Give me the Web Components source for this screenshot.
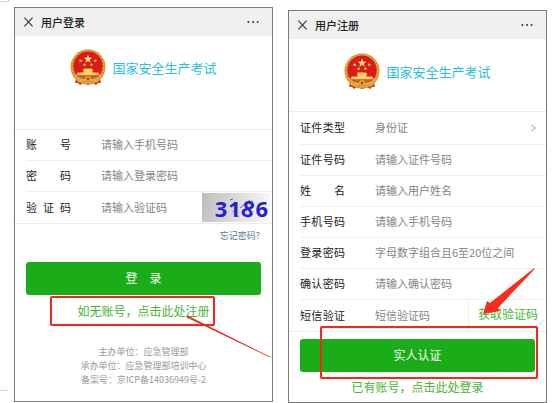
<!DOCTYPE html>
<html lang="zh-CN">
<head>
<meta charset="utf-8">
<title>国家安全生产考试</title>
<style>
  body {
    margin: 0;
    background: #fff;
    font-family: "Noto Sans CJK SC", "Noto Sans", sans-serif;
    font-size: 11px;
    color: #222;
  }
</style>
</head>
<body>
<guide-page>
  <phone-screen heading="用户登录">
    <brand-logo>国家安全生产考试</brand-logo>
    <form-list>
      <form-row label="账 号" placeholder="请输入手机号码"></form-row>
      <form-row label="密 码" type="password" placeholder="请输入登录密码"></form-row>
      <form-row label="验 证 码" placeholder="请输入验证码" last>
        <captcha-code slot="end" code="3186"></captcha-code>
      </form-row>
    </form-list>
    <forgot-link>忘记密码?</forgot-link>
    <submit-button>登&emsp;录</submit-button>
    <switch-link marked>如无账号，点击此处注册</switch-link>
    <site-footer>
      <div>主办单位：应急管理部</div>
      <div>承办单位：应急管理部培训中心</div>
      <div>备案号：京ICP备14036949号-2</div>
    </site-footer>
  </phone-screen>

  <phone-screen heading="用户注册" class="second">
    <brand-logo compact>国家安全生产考试</brand-logo>
    <form-list>
      <form-row label="证件类型" options="身份证" tall></form-row>
      <form-row label="证件号码" placeholder="请输入证件号码"></form-row>
      <form-row label="姓 名" placeholder="请输入用户姓名"></form-row>
      <form-row label="手机号码" placeholder="请输入手机号码"></form-row>
      <form-row label="登录密码" type="password" placeholder="字母数字组合且6至20位之间"></form-row>
      <form-row label="确认密码" type="password" placeholder="请输入确认密码"></form-row>
      <form-row label="短信验证" placeholder="短信验证码" last>
        <code-button slot="end">获取验证码</code-button>
      </form-row>
    </form-list>
    <submit-button class="register" marked>实人认证</submit-button>
    <switch-link class="login">已有账号，点击此处登录</switch-link>
  </phone-screen>
</guide-page>

<script>
// attaches an open shadow root filled from an html string
function render(el, html) {
  const template = document.createElement("template");
  template.innerHTML = html;
  el.attachShadow({ mode: "open" }).appendChild(template.content.cloneNode(true));
}

class GuidePage extends HTMLElement {
  constructor() {
    super();
    render(this, `
      <style>
        :host {
          display: grid;
          position: relative;
          grid-template-columns: repeat(2, minmax(0, 1fr));
          align-items: start;
          gap: 15px;
          padding: 7px 7px 0 14px;
        }
        ::slotted(.second) { margin-top: 3px; }
        .corner {
          position: absolute;
          left: 0;
          width: 8px;
          border: 0 solid #d4d4d4;
        }
        .top { top: 0; height: 1px; border-width: 0 1px 1px 0; }
        .bottom { top: 390px; border-width: 1px 0 0; }
      </style>
      <span class="corner top"></span>
      <span class="corner bottom"></span>
      <slot></slot>
    `);
  }
}

class PhoneScreen extends HTMLElement {
  constructor() {
    super();
    render(this, `
      <style>
        :host {
          display: block;
          border: 1px solid #7a7a7a;
          background: #fff;
        }
        header {
          display: flex;
          align-items: center;
          gap: 8px;
          height: 28px;
          padding: 0 13px 0 9px;
          background: #f0f0f0;
        }
        h1 {
          flex: 1;
          margin: 0;
          font-size: 11px;
          line-height: 16px;
          font-weight: 500;
        }
        button {
          display: flex;
          padding: 0;
          border: 0;
          background: none;
        }
      </style>
      <header>
        <button aria-label="关闭">
          <svg width="9" height="10" viewBox="0 0 9 10" stroke="#333" stroke-width="1.1">
            <path d="M.4.7l8.2 8.6M8.6.7L.4 9.3"/>
          </svg>
        </button>
        <h1></h1>
        <button aria-label="更多">
          <svg width="12" height="4" viewBox="0 0 12 4" fill="#333">
            <circle cx="1.4" cy="2" r="1"/><circle cx="6" cy="2" r="1"/><circle cx="10.6" cy="2" r="1"/>
          </svg>
        </button>
      </header>
      <slot></slot>
    `);
    this.shadowRoot.querySelector("h1").textContent = this.getAttribute("heading");
  }
}

class BrandLogo extends HTMLElement {
  constructor() {
    super();
    render(this, `
      <style>
        :host {
          display: flex;
          justify-content: center;
          align-items: center;
          gap: 6px;
          padding: 13px 0 43px;
          font-size: 13px;
          line-height: 20px;
          color: #2bbfdc;
        }
        :host([compact]) { padding: 14px 0 21px; }
        svg { display: block; }
      </style>
      <svg width="36" height="37" viewBox="0 0 36 37">
        <path d="M7 26L5 34q3-1 5 2l3-2 5 2 5-2 3 2q2-3 5-2l-2-8z" fill="#c8331b"/>
        <circle cx="18" cy="18" r="17.5" fill="#cf8a2e"/>
        <circle cx="18" cy="18" r="16" fill="none" stroke="#e5b04a" stroke-width="1.6" stroke-dasharray="2 1.2"/>
        <circle cx="18" cy="17" r="14.6" fill="#dc1a16"/>
        <path d="M18 5.500l1.200 3.200h3.200l-2.600 2 1 3.100-2.800-1.900-2.800 1.900 1-3.100-2.600-2h3.200z" fill="#fde18a"/>
        <g fill="#fbd36b">
          <path d="M10.7 9.8l.5 1.3h1.4l-1.1.9.4 1.4-1.2-.8-1.2.8.4-1.4-1.1-.9h1.4z"/>
          <path d="M25.3 9.8l.5 1.3h1.4l-1.1.9.4 1.4-1.2-.8-1.2.8.4-1.4-1.1-.9h1.4z"/>
          <path d="M14.6 13.700l.5 1.3h1.3l-1 .8.3 1.4-1.1-.8-1.1.8.3-1.4-1-.8h1.3z"/>
          <path d="M21.4 13.700l.5 1.3h1.3l-1 .8.3 1.4-1.1-.8-1.1.8.3-1.4-1-.8h1.3z"/>
          <path d="M14 19.500h8l1.500 2h-11zM13.500 21.500h9v2h-9zM7.500 23.500h21l1 3h-23z"/>
        </g>
        <path d="M5 26.5h26q-4 4-8 4.5H13q-4-.5-8-4.5z" fill="#c4641f"/>
        <path d="M5 26q4 5 10 4.5M31 26q-4 5-10 4.5M7 32q5-1 8-1M29 32q-5-1-8-1" fill="none" stroke="#e9b44b" stroke-width="1.3"/>
        <circle cx="18" cy="30" r="3" fill="#dfa33c"/>
        <circle cx="18" cy="30" r="1.2" fill="#b2381c"/>
        <path d="M13 34q5-2 10 0M9 30l1 4M27 30l-1 4" fill="none" stroke="#e0a03a"/>
      </svg>
      <slot></slot>
    `);
  }
}

class FormList extends HTMLElement {
  constructor() {
    super();
    render(this, `
      <style>
        :host {
          display: block;
          border: solid #ececec;
          border-width: 1px 0;
          padding-left: 11px;
        }
      </style>
      <slot></slot>
    `);
  }
}

class FormRow extends HTMLElement {
  constructor() {
    super();
    render(this, `
      <style>
        :host {
          display: flex;
          align-items: center;
          box-sizing: border-box;
          height: 31px;
          border-bottom: 1px solid #efefef;
        }
        :host([tall]) { height: 33px; }
        :host([last]) { border-bottom: 0; }
        label {
          flex: none;
          width: 45px;
          margin-right: 30px;
          padding-bottom: 2px;
          line-height: 16px;
          text-align-last: justify;
        }
        input, select {
          flex: 1;
          min-width: 0;
          height: 20px;
          margin: 0;
          padding: 0 0 2px;
          border: 0;
          outline: 0;
          appearance: none;
          background: none;
          font: inherit;
          color: #858585;
        }
        input::placeholder { color: #858585; }
        svg { margin-right: 10px; }
        ::slotted(*) { flex: none; }
      </style>
      <label for="field"></label>
    `);
    const root = this.shadowRoot;
    root.querySelector("label").textContent = this.getAttribute("label");

    if (this.hasAttribute("options")) {
      const select = document.createElement("select");
      select.id = "field";
      this.getAttribute("options").split(",").forEach((name) => select.add(new Option(name)));
      root.append(select);
      select.insertAdjacentHTML("afterend", `
        <svg width="5" height="8" viewBox="0 0 5 8" fill="none" stroke="#b5b5b5" stroke-width="1.2">
          <path d="M.6.6L4.2 4 .6 7.4"/>
        </svg>`);
    } else {
      const input = document.createElement("input");
      input.id = "field";
      input.type = this.getAttribute("type") || "text";
      input.placeholder = this.getAttribute("placeholder");
      root.append(input);
    }

    const slot = document.createElement("slot");
    slot.name = "end";
    root.append(slot);
  }
}

class CaptchaCode extends HTMLElement {
  constructor() {
    super();
    render(this, `
      <style>
        :host {
          display: flex;
          justify-content: flex-end;
          align-items: center;
          gap: 1px;
          box-sizing: border-box;
          position: relative;
          width: 68px;
          height: 29px;
          margin-right: 2px;
          padding-right: 2px;
          background: linear-gradient(100deg, #bebebe, #dcdcdc 50%, #fafafa);
          font: bold 22px/28px "Open Sans", "Noto Sans", sans-serif;
          color: #2420d8;
        }
        span:nth-of-type(3) { transform: rotate(14deg); }
        svg { position: absolute; inset: 0; }
      </style>
      <svg width="68" height="29" viewBox="0 0 68 29" fill="none" stroke="#4a4a78" stroke-width=".8">
        <path d="M28 7l3-1M31 18l6 6M38 15l10-8M45 10l6-2"/>
      </svg>
    `);
    for (const digit of this.getAttribute("code")) {
      const span = document.createElement("span");
      span.textContent = digit;
      this.shadowRoot.append(span);
    }
  }
}

class CodeButton extends HTMLElement {
  constructor() {
    super();
    render(this, `
      <style>
        :host {
          display: flex;
          position: relative;
          height: 31px;
          border-left: 1px solid #ececec;
        }
        button {
          padding: 0 8px 4px 9px;
          border: 0;
          background: none;
          font: inherit;
          font-size: 12px;
          white-space: nowrap;
          color: #45b62f;
        }
        svg {
          position: absolute;
          right: 11px;
          bottom: 16px;
          pointer-events: none;
        }
      </style>
      <button><slot></slot></button>
      <svg width="52" height="47" viewBox="0 0 52 47" fill="#f92c1d">
        <path d="M0 46L4 33l3 2L51 .3 51.700 1 15 40l2 3z"/>
      </svg>
    `);
  }
}

class ForgotLink extends HTMLElement {
  constructor() {
    super();
    render(this, `
      <style>
        :host {
          display: flex;
          justify-content: flex-end;
          padding: 5px 12px 20px;
          font-size: 9px;
          line-height: 13px;
        }
        a { color: #64748a; text-decoration: none; }
      </style>
      <a href="#"><slot></slot></a>
    `);
  }
}

class SubmitButton extends HTMLElement {
  constructor() {
    super();
    render(this, `
      <style>
        :host {
          display: block;
          position: relative;
          padding: 0 11px;
        }
        :host(.register) { padding-top: 7px; }
        button {
          display: block;
          width: 100%;
          height: 33px;
          padding: 0 0 2px;
          border: 0;
          border-radius: 3px;
          background: #1aad19;
          font: inherit;
          font-size: 12px;
          color: #fff;
        }
        .mark { display: none; }
        :host([marked]) .mark {
          display: block;
          position: absolute;
          inset: -6px 8px -7px 31px;
          border: 2px solid #fb2418;
          border-radius: 2px;
          pointer-events: none;
        }
      </style>
      <button><slot></slot></button>
      <span class="mark"></span>
    `);
  }
}

class SwitchLink extends HTMLElement {
  constructor() {
    super();
    render(this, `
      <style>
        :host {
          display: block;
          position: relative;
          padding: 8px 0;
          text-align: center;
          font-size: 12px;
          line-height: 16px;
        }
        :host(.login) { padding: 7px 0; }
        a { color: #45b62f; text-decoration: none; }
        .mark, svg { display: none; position: absolute; pointer-events: none; }
        :host([marked]) .mark {
          display: block;
          inset: 1px 57px 1px 35px;
          border: 2px solid #fb2418;
          border-radius: 2px;
        }
        :host([marked]) svg { display: block; right: 1px; top: 20px; }
      </style>
      <a href="#"><slot></slot></a>
      <span class="mark"></span>
      <svg width="85" height="43" viewBox="0 0 85 43" fill="#e8281c">
        <path d="M1 .3L84.5 42 84 42.5.3 2.2z"/>
      </svg>
    `);
  }
}

class SiteFooter extends HTMLElement {
  constructor() {
    super();
    render(this, `
      <style>
        :host {
          display: block;
          padding: 18px 0 14px;
          text-align: center;
          font-size: 9px;
          line-height: 14px;
          color: #999;
        }
      </style>
      <slot></slot>
    `);
  }
}

customElements.define("guide-page", GuidePage);
customElements.define("phone-screen", PhoneScreen);
customElements.define("brand-logo", BrandLogo);
customElements.define("form-list", FormList);
customElements.define("form-row", FormRow);
customElements.define("captcha-code", CaptchaCode);
customElements.define("code-button", CodeButton);
customElements.define("forgot-link", ForgotLink);
customElements.define("submit-button", SubmitButton);
customElements.define("switch-link", SwitchLink);
customElements.define("site-footer", SiteFooter);
</script>
</body>
</html>
